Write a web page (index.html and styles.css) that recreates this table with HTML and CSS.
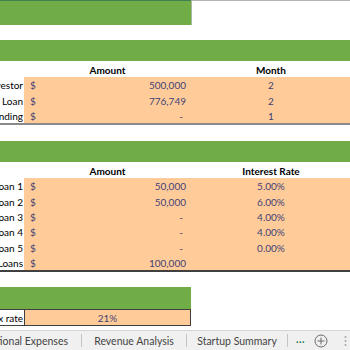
FILE: index.html
```html
<!DOCTYPE html>
<html lang="en">
<head>
    <meta charset="UTF-8">
    <meta name="viewport" content="width=device-width, initial-scale=1.0">
    <title>Startup Funding</title>
    <link rel="stylesheet" href="styles.css">
</head>
<body>

<div class="sheet">
    <div class="top-line">
        <div class="title-band"></div>
    </div>
    <div class="blank blank-15"></div>

    <!-- funding sources -->
    <div class="band"></div>
    <div class="row head">
        <div class="label"></div>
        <div class="cell center">Amount</div>
        <div class="cell center">Month</div>
    </div>
    <div class="row">
        <div class="label"><span>Funding from Investor</span></div>
        <div class="cell money input"><span>$</span><span>500,000</span></div>
        <div class="cell center input">2</div>
    </div>
    <div class="row tall">
        <div class="label"><span>Bank Loan</span></div>
        <div class="cell money input"><span>$</span><span>776,749</span></div>
        <div class="cell center input">2</div>
    </div>
    <div class="row last">
        <div class="label"><span>Other Funding</span></div>
        <div class="cell money input"><span>$</span><span class="dash">-</span></div>
        <div class="cell center input">1</div>
    </div>
    <div class="blank blank-16"></div>

    <!-- loans -->
    <div class="band"></div>
    <div class="row head">
        <div class="label"></div>
        <div class="cell center">Amount</div>
        <div class="cell center">Interest Rate</div>
    </div>
    <div class="row">
        <div class="label"><span>Loan 1</span></div>
        <div class="cell money input"><span>$</span><span>50,000</span></div>
        <div class="cell center input">5.00%</div>
    </div>
    <div class="row tall">
        <div class="label"><span>Loan 2</span></div>
        <div class="cell money input"><span>$</span><span>50,000</span></div>
        <div class="cell center input">6.00%</div>
    </div>
    <div class="row">
        <div class="label"><span>Loan 3</span></div>
        <div class="cell money input"><span>$</span><span class="dash">-</span></div>
        <div class="cell center input">4.00%</div>
    </div>
    <div class="row">
        <div class="label"><span>Loan 4</span></div>
        <div class="cell money input"><span>$</span><span class="dash">-</span></div>
        <div class="cell center input">4.00%</div>
    </div>
    <div class="row tall">
        <div class="label"><span>Loan 5</span></div>
        <div class="cell money input"><span>$</span><span class="dash">-</span></div>
        <div class="cell center input">0.00%</div>
    </div>
    <div class="row last dark">
        <div class="label"><span>Total Loans</span></div>
        <div class="cell money input"><span>$</span><span>100,000</span></div>
        <div class="cell input"></div>
    </div>
    <div class="blank blank-15"></div>

    <!-- tax -->
    <div class="band short"></div>
    <div class="tax-row">
        <div class="label"><span>Tax rate</span></div>
        <div class="cell center input">21%</div>
    </div>
</div>

<div class="tabs">
    <div class="tab first"><span>Operational Expenses</span></div>
    <div class="tab revenue">Revenue Analysis</div>
    <div class="tab summary">Startup Summary</div>
    <div class="tab-more">...</div>
    <div class="tab-add">
        <svg width="14" height="14" viewBox="0 0 14 14">
            <circle cx="7" cy="7" r="6" fill="none" stroke="#6b6b6b" stroke-width="1"/>
            <path d="M7 3.5v7M3.5 7h7" stroke="#6b6b6b" stroke-width="1"/>
        </svg>
    </div>
    <div class="tab-menu">
        <svg width="3" height="12" viewBox="0 0 3 12">
            <circle cx="1.5" cy="2" r="1" fill="#a6a6a6"/>
            <circle cx="1.5" cy="6" r="1" fill="#a6a6a6"/>
            <circle cx="1.5" cy="10" r="1" fill="#a6a6a6"/>
        </svg>
    </div>
</div>

</body>
</html>
```

FILE: styles.css
```css
body {
    margin: 0;
    padding: 0;
    width: 350px;
    height: 350px;
    overflow: hidden;
    background-color: white;
    font-family: 'Lato', 'Open Sans', sans-serif;
    font-size: 10px;
    color: black;
}

.sheet {
    height: 330px;
    overflow: hidden;
}

.top-line {
    border-top: 1px solid #b4b4b4;
}

.title-band {
    width: 191px;
    height: 24px;
    margin-top: -1px;
    border-top: 1px solid #3f7f52;
    background-color: #70ad47;
    box-shadow: 1px 0 0 #a9b8a0;
}

.blank-15 {
    height: 15px;
}

.blank-16 {
    height: 16px;
}

.band {
    height: 21px;
    background-color: #70ad47;
}

.band.short {
    width: 191px;
    height: 22px;
}

.row {
    display: grid;
    grid-template-columns: 24px 167px 160px;
    height: 15px;
}

.row.tall {
    height: 16px;
}

.row.head {
    height: 16px;
    font-weight: bold;
}

.row.last {
    border-bottom: 2px solid #8a8a8a;
}

.row.last.dark {
    border-bottom-color: #404040;
}

.label {
    display: flex;
    justify-content: flex-end;
    align-items: flex-end;
    padding-right: 1px;
    padding-bottom: 1px;
    white-space: nowrap;
    overflow: visible;
}

.cell {
    display: flex;
    align-items: flex-end;
    padding-bottom: 1px;
    white-space: nowrap;
}

.cell.center {
    justify-content: center;
}

.cell.input {
    background-color: #ffcc99;
    color: #3f3f76;
}

.cell.money {
    justify-content: space-between;
    padding-left: 6px;
    padding-right: 5px;
}

.dash {
    padding-right: 3px;
}

.tax-row {
    display: grid;
    grid-template-columns: 24px 167px;
    height: 15px;
    width: 191px;
    border-top: 1px solid #3f3f3f;
    border-bottom: 1px solid #3f3f3f;
}

.tax-row .cell {
    border-left: 1px solid #3f3f3f;
    border-right: 1px solid #3f3f3f;
}

.tabs {
    display: flex;
    align-items: center;
    height: 19px;
    border-top: 1px solid #d6d6d6;
    background-color: #f0f0f0;
    font-family: 'Lato', 'Open Sans', sans-serif;
    font-size: 10.5px;
    color: #444;
}

.tabs > div {
    flex-shrink: 0;
}

.tab {
    display: flex;
    align-items: center;
    justify-content: center;
    height: 13px;
    border-right: 1px solid #c4c4c4;
    white-space: nowrap;
}

.tab.first {
    width: 68px;
    justify-content: flex-end;
    padding-right: 13px;
}

.tab.revenue {
    width: 104px;
}

.tab.summary {
    width: 100px;
}

.tab-more {
    padding: 0 0 4px 8px;
    color: #217346;
    font-weight: bold;
    letter-spacing: 0.5px;
}

.tab-add {
    display: flex;
    margin-left: 9px;
}

.tab-menu {
    display: flex;
    margin-left: 16px;
}
```
